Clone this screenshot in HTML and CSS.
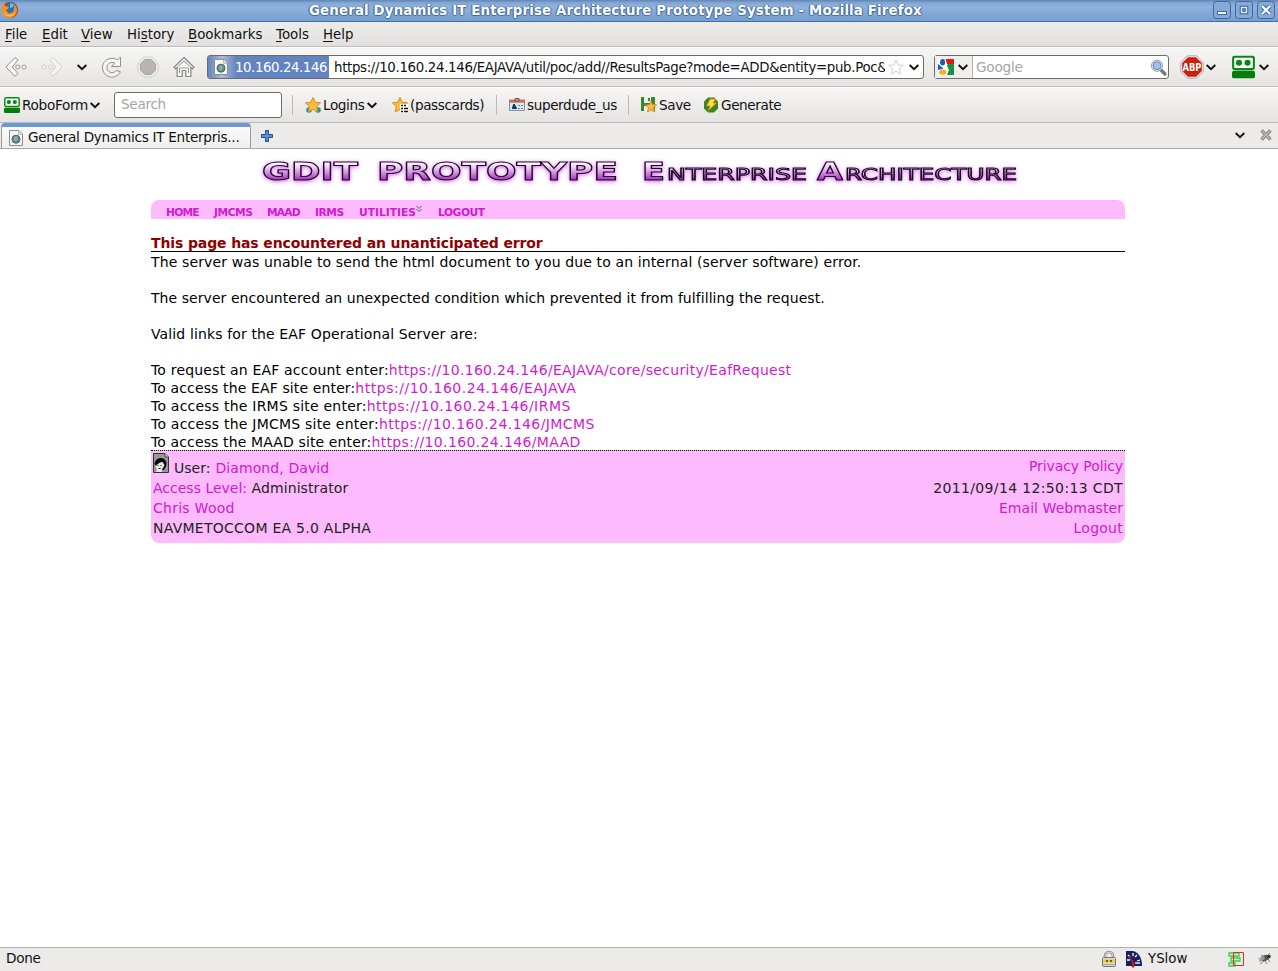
FILE: index.html
```
<!DOCTYPE html>
<html lang="en">
<head>
<meta charset="utf-8">
<title>General Dynamics IT Enterprise Architecture Prototype System</title>
<link rel="stylesheet" href="styles.css">
</head>
<body>
<svg class="defs" width="0" height="0">
  <defs>
    <symbol id="chev" viewBox="0 0 10 7"><path d="M.6 1L5 5.200L9.400 1" fill="none" stroke="#111" stroke-width="2"/></symbol>
    <symbol id="robo" viewBox="0 0 24 24"><rect x="1.2" y="1.2" width="21.6" height="13" rx="2" fill="#fff" stroke="#078a10" stroke-width="2.2"/><circle cx="7.3" cy="7.6" r="3.2" fill="#078a10"/><circle cx="16.2" cy="7.6" r="3.2" fill="#078a10"/><rect x="0" y="16" width="24" height="8" rx="2" fill="#067d0b"/></symbol>
    <symbol id="page" viewBox="0 0 16 16"><path d="M1.5.5H11L14.5 4V15.5H1.5Z" fill="#f7f7f5" stroke="#8d8d88"/><path d="M10.5.8V4.3H14.2" fill="#ddd" stroke="#aaa" stroke-width=".8"/><circle cx="8" cy="9.2" r="4" fill="#5d88a8" stroke="#46617c"/><path d="M6 7l3-1 1 3-2 3-2-2z" fill="#91b17b"/></symbol>
    <symbol id="star" viewBox="0 0 16 16"><path d="M8 .6l2.300 4.700 5.200.6-3.900 3.700 1.200 5.200L8 12.400 3.200 14.800l1.200-5.200L.5 5.900l5.200-.6z" fill="#f8bf3c" stroke="#d58a16"/></symbol>
    <linearGradient id="chrome" x1="0" y1="0" x2="0" y2="1"><stop offset=".2" stop-color="#fff"/><stop offset=".5" stop-color="#d79ee4"/><stop offset=".9" stop-color="#8d0ba8"/></linearGradient>
  </defs>
</svg>
<div class="window">
  <header class="titlebar">
    <svg class="firefox" viewBox="0 0 18 18"><circle cx="9" cy="9" r="8.2" fill="#b9450f"/><circle cx="10" cy="7" r="5.8" fill="#2d70b4"/><path d="M9 2l4 1-1 3-3 1z" fill="#6ebcf0"/><path d="M1 4l2-2 1 3 4 1-1 2-2 1 2 3c3 1 6-1 6-4 1-3 0-4-1-5 4 2 5 6 3 10-3 5-10 5-13 1C0 11 0 7 1 4z" fill="#f59222"/><path d="M2 9c1 5 7 7 12 3-2 5-11 5-12-3z" fill="#ffc551"/></svg>
    <h1 class="window-title">General Dynamics IT Enterprise Architecture Prototype System - Mozilla Firefox</h1>
    <div class="controls">
      <svg viewBox="0 0 18 18"><rect class="btn" x=".5" y=".5" width="17" height="17" rx="3"/><rect x="4.5" y="10.5" width="9" height="3" fill="#fff" stroke="#3e689f"/></svg>
      <svg viewBox="0 0 18 18"><rect class="btn" x=".5" y=".5" width="17" height="17" rx="3"/><rect x="6.500" y="6.500" width="5" height="5" fill="none" stroke="#3e689f" stroke-width="3.600"/><rect x="6.500" y="6.500" width="5" height="5" fill="none" stroke="#dfeafa" stroke-width="1.400"/></svg>
      <svg viewBox="0 0 18 18"><rect class="btn" x=".5" y=".5" width="17" height="17" rx="3"/><path d="M5 5l8 8M13 5l-8 8" stroke="#3e689f" stroke-width="4.4"/><path d="M5 5l8 8M13 5l-8 8" stroke="#fff" stroke-width="2.4"/></svg>
    </div>
  </header>

  <nav class="menubar"><span><u>F</u>ile</span><span><u>E</u>dit</span><span><u>V</u>iew</span><span>Hi<u>s</u>tory</span><span><u>B</u>ookmarks</span><span><u>T</u>ools</span><span><u>H</u>elp</span></nav>

  <div class="navbar">
    <div class="navbuttons">
      <svg viewBox="0 0 24 24"><path d="M2 12L11 2.5l3 2.6L8.2 12l5.8 6.5-3 2.8z" fill="#fafaf9" stroke="#91918e"/><g fill="#fff" stroke="#969693"><circle cx="13.7" cy="12" r="2"/><circle cx="20" cy="12" r="2"/></g></svg>
      <svg viewBox="0 0 24 24"><path d="M22 12L13 2.5l-3 2.6L15.8 12 10 18.5l3 2.8z" fill="#f4f4f3" stroke="#cfcfcc"/><g fill="#f4f4f3" stroke="#d0d0cd"><circle cx="4" cy="12" r="2"/><circle cx="10.3" cy="12" r="2"/></g></svg>
      <svg class="chev" viewBox="0 0 10 7"><use href="#chev"/></svg>
      <svg viewBox="0 0 24 24"><path d="M20.500 2v9.500h-9l3.300-3.400a5.200 5.200 0 1 0 1.500 7.400l4.200 1.300A9.500 9.500 0 1 1 17.500 5z" fill="#f6f6f5" stroke="#91918e" stroke-linejoin="round"/></svg>
      <svg viewBox="0 0 24 24"><path d="M7.8 2h8.4l5.8 5.8v8.4L16.2 22H7.8L2 16.2V7.8z" fill="#eeeeec" stroke="#d0cecb"/><path d="M8.8 4.5h6.4l4.3 4.3v6.4l-4.3 4.3H8.8l-4.3-4.3V8.8z" fill="#bab3b2" stroke="#aaa5a3"/></svg>
      <svg viewBox="0 0 24 24"><path d="M12 2.5l10 9.8-1.7 1.5-1.5-1.3V21.5h-5v-6h-3.6v6h-5v-9l-1.5 1.3L2 12.3z" fill="#f8f8f7" stroke="#858582" stroke-width="1.2"/><path d="M6 11.5L12 6l6 5.5" fill="none" stroke="#858582"/><path d="M7.5 18v-5h9v5" fill="none" stroke="#999"/></svg>
    </div>
    <div class="url">
      <div class="identity"><svg viewBox="0 0 16 16"><use href="#page"/></svg><span>10.160.24.146</span></div>
      <div class="address">https://10.160.24.146/EAJAVA/util/poc/add//ResultsPage?mode=ADD&amp;entity=pub.Poc&amp;</div>
      <svg class="bookmark" viewBox="0 0 16 16"><path d="M8 1l2 5 5.3.3-4 3.4 1.2 5.3L8 12.2 3.5 15l1.2-5.3-4-3.4L6 6z" fill="#fff" stroke="#d0d0cd"/></svg>
      <svg class="chev" viewBox="0 0 10 7"><use href="#chev"/></svg>
    </div>
    <div class="google">
      <div class="engine"><svg class="glogo" viewBox="0 0 16 16"><path fill="#fff" d="M0 0h16v16H0z"/><path d="M7.500 0H16v5H9z" fill="#e41913"/><path d="M9.500 5H16v11H9l2-5-2-4z" fill="#109745"/><path d="M0 5l5.500 4.500L0 11z" fill="#185bc2"/><ellipse cx="4.600" cy="3.300" rx="2.500" ry="3.300" fill="#185bc2"/><ellipse cx="4.700" cy="13.200" rx="3.700" ry="2.600" fill="#f4b31a"/></svg><svg class="chev" viewBox="0 0 10 7"><use href="#chev"/></svg></div>
      <span>Google</span>
      <svg class="lens" viewBox="0 0 17 17"><path d="M10 10l5 5" stroke="#777" stroke-width="3.3" stroke-linecap="round"/><circle cx="7" cy="6.7" r="5.6" fill="#e8eef5" stroke="#9b9e9f"/><circle cx="7" cy="6.7" r="4" fill="#9fc2e9" stroke="#5e88ba"/></svg>
    </div>
    <svg class="abp" viewBox="0 0 24 24"><path d="M7.4.8h9.2l6.6 6.6v9.2l-6.6 6.6H7.4L.8 16.6V7.4z" fill="#eee" stroke="#aaa"/><path d="M8 2.2h8L21.8 8v8L16 21.8H8L2.2 16V8z" fill="#c91f0f"/><text x="2.6" y="16" textLength="18.8" lengthAdjust="spacingAndGlyphs">ABP</text></svg>
    <svg class="chev abp-chev" viewBox="0 0 10 7"><use href="#chev"/></svg>
    <svg class="robo-big" viewBox="0 0 24 24"><use href="#robo"/></svg>
    <svg class="chev robo-chev" viewBox="0 0 10 7"><use href="#chev"/></svg>
  </div>

  <div class="robobar">
    <svg class="i16" viewBox="0 0 24 24"><use href="#robo"/></svg><span class="t-robo">RoboForm</span><svg class="chev" viewBox="0 0 10 7"><use href="#chev"/></svg>
    <div class="searchbox">Search</div>
    <i class="sep sep-a"></i>
    <svg class="i16" viewBox="0 0 16 16"><circle cx="4" cy="13" r="2.8" fill="#238eaa"/><circle cx="13" cy="13" r="2.8" fill="#238eaa"/><use href="#star"/></svg><span class="t-logins">Logins</span><svg class="chev" viewBox="0 0 10 7"><use href="#chev"/></svg>
    <svg class="i16 pass" viewBox="0 0 16 16"><use href="#star"/><path d="M8 7h8v9H8z" fill="#fff"/><path d="M9 8.5h2m1 0h2m-5 3h2m1 0h4m-7 3h2m1 0h4" stroke="#111" stroke-width="1.3"/></svg><span class="t-pass">(passcards)</span>
    <i class="sep sep-b"></i>
    <svg class="i16" viewBox="0 0 16 16"><path d="M.5 3.5h15v10H.5z" fill="#dce8f1" stroke="#8292a1"/><path d="M0 2.500h16v3.200H0z" fill="#d36c4d"/><path d="M6 1.5h4V4H6z" fill="#aaa" stroke="#58656e"/><path d="M3 12c0-3 1-3 1-5h2c0 2 2 2 2 5z" fill="#153e68"/><path d="M9 8.5h5m-5 3h5" stroke="#6986a2" stroke-dasharray="2 1"/></svg><span class="t-user">superdude_us</span>
    <i class="sep sep-c"></i>
    <svg class="i16" viewBox="0 0 16 16"><path d="M0 0h14v14H0z" fill="#348734"/><path d="M3 0h7v6H3zM3 9h8v5H3z" fill="#eaf1e8"/><path d="M7 1h2v3H7z" fill="#348734"/><path d="M10 4l1.7 3.5 4 .3-3 2.8.9 4.4-3.6-2.1L6.500 15l.8-4.3-3-2.8 4-.4z" fill="#f6bb44" stroke="#d07e16" stroke-width=".8"/></svg><span class="t-save">Save</span>
    <svg class="i16" viewBox="0 0 16 16"><path d="M5 .5h6l4 4v7l-4 4H5l-4-4v-7z" fill="#3a861a"/><path d="M7 2h6l-3 4h3.500L5 14l2-5H3.500z" fill="#ffd84d" stroke="#c9811a" stroke-width=".7"/></svg><span class="t-gen">Generate</span>
  </div>

  <div class="tabs">
    <div class="tab"><svg class="i16" viewBox="0 0 16 16"><use href="#page"/></svg><span>General Dynamics IT Enterpris...</span></div>
    <svg class="plus" viewBox="0 0 12 12"><path d="M4.500.5h3v4h4v3h-4v4h-3v-4h-4v-3h4z" fill="#5b91d0" stroke="#204a87"/></svg>
    <svg class="chev tab-chev" viewBox="0 0 10 7"><use href="#chev"/></svg>
    <svg class="tab-close" viewBox="0 0 12 12"><path d="M1.500 1.500l9 9M10.500 1.500l-9 9" stroke="#84867f" stroke-width="3.400"/><path d="M2 2l8 8M10 2l-8 8" stroke="#bbbcb7" stroke-width="1.400"/></svg>
  </div>

  <main class="page">
    <svg class="logo" viewBox="0 0 974 51">
      <g class="logo-text">
        <text class="big" x="111" y="31" textLength="96" lengthAdjust="spacingAndGlyphs">GDIT</text>
        <text class="big" x="226" y="31" textLength="241" lengthAdjust="spacingAndGlyphs">PROTOTYPE</text>
        <text class="big" x="491" y="31" textLength="23" lengthAdjust="spacingAndGlyphs">E</text>
        <text class="small" x="516" y="31" textLength="140" lengthAdjust="spacingAndGlyphs">NTERPRISE</text>
        <text class="big" x="666" y="31" textLength="26" lengthAdjust="spacingAndGlyphs">A</text>
        <text class="small" x="694" y="31" textLength="172" lengthAdjust="spacingAndGlyphs">RCHITECTURE</text>
      </g>
    </svg>
    <nav class="sitenav"><a>HOME</a><a>JMCMS</a><a>MAAD</a><a>IRMS</a><a>UTILITIES<svg viewBox="0 0 6 6"><path d="M.5 0L3 2.500 5.500 0M.5 3L3 5.500 5.500 3" fill="none" stroke="#4c54a5"/></svg></a><a>LOGOUT</a></nav>
    <h2 class="error">This page has encountered an unanticipated error</h2>
    <div class="message">
      <p>The server was unable to send the html document to you due to an internal (server software) error.</p>
      <p class="snug">The server encountered an unexpected condition which prevented it from fulfilling the request.</p>
      <p>Valid links for the EAF Operational Server are:</p>
      <ul>
        <li class="account">To request an EAF account enter:<a>https://10.160.24.146/EAJAVA/core/security/EafRequest</a></li>
        <li class="eaf">To access the EAF site enter:<a>https://10.160.24.146/EAJAVA</a></li>
        <li class="irms">To access the IRMS site enter:<a>https://10.160.24.146/IRMS</a></li>
        <li class="jmcms">To access the JMCMS site enter:<a>https://10.160.24.146/JMCMS</a></li>
        <li class="maad">To access the MAAD site enter:<a>https://10.160.24.146/MAAD</a></li>
      </ul>
    </div>
    <footer class="sitefoot">
      <div class="row first"><span><svg class="face" viewBox="0 0 16 20"><path d="M.5.5H12L15.500 4V19.500H.5z" fill="#999" stroke="#333"/><path d="M12 .5V4h3.500" fill="#ddd" stroke="#444"/><path d="M1.500 11C2 7 5 5 8 5s6 3 5.500 6c0 3-2 4-2.500 6H9l2-5-2-3-3 1-3 3z" fill="#080808"/><path d="M2.500 13l4-3 3-1 2 3-1.500 3-1 1v3H3l1-2z" fill="#e8e8e8"/><path d="M4.500 12.500h1m2 0h1M5.500 15.500h2" stroke="#111"/></svg> User: <a class="username">Diamond, David</a></span><a class="privacy">Privacy Policy</a></div>
      <div class="row"><span><a>Access Level:</a> <span class="role">Administrator</span></span><span class="date">2011/09/14 12:50:13 CDT</span></div>
      <div class="row"><a class="wide">Chris Wood</a><a class="mail">Email Webmaster</a></div>
      <div class="row"><span class="wide">NAVMETOCCOM EA 5.0 ALPHA</span><a class="wide">Logout</a></div>
    </footer>
  </main>

  <div class="status">
    <span class="done">Done</span>
    <svg class="i16 lock" viewBox="0 0 16 16"><path d="M4 8V5a4 4 0 0 1 8 0v3" fill="none" stroke="#888" stroke-width="2.6"/><path d="M4 8V5a4 4 0 0 1 8 0v3" fill="none" stroke="#ddd"/><rect x="1.500" y="6.500" width="13" height="9" rx="1" fill="#ddd9c4" stroke="#777"/><path d="M2 8.500h12v3H2z" fill="#e9cf34"/><path d="M2 13.500h12" stroke="#aaa"/><path d="M5 9h2v2H5zM9 9h2v2H9z" fill="#665e32"/></svg>
    <svg class="i16 gauge" viewBox="0 0 16 16"><path d="M0 0h7c5 1 9 6 9 15H0z" fill="#16215f"/><path d="M2 4l2 2M7 2v3M11 4l-2 2M14 9l-3 1M1 9h3" stroke="#fff" stroke-width="1.300"/><path d="M3 5l4 7-1 4h2l-1-5z" fill="#df1919" stroke="#e11"/><path d="M9 12h5" stroke="#96b6ed" stroke-width="2"/></svg>
    <span class="yslow">YSlow</span>
    <svg class="i16 shape" viewBox="0 0 16 16"><path d="M1 2h10v3H1zM3 7h9v3H3zM1 12h6v3H1z" fill="none" stroke="#37cf45" stroke-width="1.300"/><path d="M5.500 1.500h10v13h-10z" fill="none" stroke="#e02e2e"/></svg>
    <svg class="i16 bug" viewBox="0 0 16 16"><path d="M3 10l4-1M4 13l4-3M5 4l4 3M9 10l2 3M12 8l2 3M11 5l3-3" stroke="#888" fill="none"/><ellipse cx="9" cy="7" rx="4.500" ry="2.800" transform="rotate(-20 9 7)" fill="#555"/><path d="M2 7l6-2 1 3-5 3z" fill="#aaa" opacity=".8"/><circle cx="13" cy="5.500" r="1.800" fill="#333"/></svg>
  </div>
</div>
</body>
</html>
```
FILE: styles.css
```
* { box-sizing: border-box; }
body { margin: 0; font: 13.6px/18px "DejaVu Sans", sans-serif; color: #111; background: #fff; }
.defs { position: absolute; }
svg { display: block; flex: none; overflow: visible; }
.window { display: flex; flex-direction: column; width: 1278px; height: 971px; overflow: hidden; white-space: nowrap; }
.i16 { width: 16px; height: 16px; }
.chev { width: 10px; height: 7px; }

.titlebar { height: 22px; display: flex; flex: none; background: linear-gradient(#6285b4 0, #84a8d5 3px, #8fb3df 7px, #779fd0 20px); border-bottom: 1px solid #436fa8; }
.firefox { width: 18px; height: 18px; margin: 1px 0 0 1px; }
.window-title { flex: 1; margin: 0 0 0 290px; font-size: 13.33px; line-height: 21px; letter-spacing: .16px; font-weight: bold; color: #fff; text-shadow: 0 1px 1px #416799, 1px 0 1px #416799, -1px 0 1px #416799; }
.controls { display: flex; gap: 4px; padding: 1px 3px 0 0; }
.controls svg { width: 18px; height: 18px; }
.btn { fill: #84aad9; stroke: #3e689f; }

.menubar { height: 25px; flex: none; display: grid; grid-template-columns: 37px 39px 46px 61px 88px 47px 50px; padding-left: 5px; line-height: 25px; background: linear-gradient(#edeceb, #e2e1df); border-bottom: 1px solid #bdbcba; font-size: 13.33px; }
.menubar u { text-underline-offset: 2px; }

.navbar { height: 40px; flex: none; display: flex; align-items: center; background: linear-gradient(#f5f5f4, #e5e4e2); border-top: 1px solid #fff; border-bottom: 1px solid #bfbebc; }
.navbuttons { display: flex; align-items: center; width: 207px; padding-left: 4px; }
.navbuttons svg { width: 24px; height: 24px; }
.navbuttons svg + svg { margin-left: 12px; }
.navbuttons .chev, .navbuttons svg.chev { width: 10px; height: 7px; margin-left: 13px; }
.navbuttons .chev + svg { margin-left: 13px; }
.url { width: 717px; height: 24px; display: flex; align-items: center; border: 1px solid #6c6c6a; border-radius: 3px; background: #fff; }
.identity { width: 121px; height: 22px; display: flex; align-items: center; gap: 6px; padding-left: 5px; color: #fff; background: linear-gradient(90deg, #6484bb 0, #a9bcdc 14px, #6685bf 28px, #6284c2 60px); letter-spacing: -.42px; font-size: 13.33px; }
.identity svg { width: 16px; height: 16px; }
.identity span { padding-top: 1px; }
.address { width: 556px; padding: 1px 0 0 5px; overflow: hidden; font-size: 13.33px; letter-spacing: -.32px; }
.bookmark { width: 16px; height: 16px; margin-left: 3px; }
.url .chev { margin-left: 5px; }
.google { width: 235px; height: 24px; margin-left: 10px; display: flex; align-items: center; border: 1px solid #6c6c6a; border-radius: 3px; background: #fff; color: #a5a5a3; }
.engine { width: 38px; height: 22px; display: flex; align-items: center; gap: 4px; padding-left: 3px; background: #f0efee; border-right: 1px solid #b3b2b0; }
.glogo { width: 16px; height: 16px; }
.google span { flex: 1; padding-left: 3px; letter-spacing: -.2px; }
.lens { width: 17px; height: 17px; margin-right: 1px; }
.abp { width: 24px; height: 24px; margin-left: 11px; }
.abp text { font: bold 10px "DejaVu Sans", sans-serif; fill: #fff; }
.abp-chev { margin-left: 2px; }
.robo-big { width: 23px; height: 24px; margin-left: 16px; }
.robo-chev { margin-left: 4px; }

.robobar { height: 36px; flex: none; display: flex; align-items: center; padding-left: 4px; background: linear-gradient(#f7f6f5, #e4e3e1); border-top: 1px solid #fff; border-bottom: 1px solid #bab9b7; }
.robobar span { padding-left: 2px; letter-spacing: -.4px; }
.robobar .t-robo { width: 70px; letter-spacing: -.3px; }
.searchbox { width: 168px; height: 26px; margin-left: 14px; padding-left: 6px; line-height: 23px; border: 1px solid #6c6c6a; border-radius: 3px; background: #fff; color: #a5a5a3; letter-spacing: -.3px; }
.sep { width: 1px; height: 20px; background: #bbbab8; }
.sep-a { margin: 0 12px 0 10px; }
.t-logins { width: 46px; }
.pass { margin-left: 15px; }
.t-pass { width: 88px; }
.sep-b { margin-right: 12px; }
.t-user { width: 103px; }
.sep-c { margin-right: 12px; }
.t-save { width: 46px; }

.tabs { height: 26px; flex: none; display: flex; align-items: center; background: #ecebe9; border-bottom: 1px solid #aaa9a7; }
.tab { width: 250px; height: 25px; align-self: flex-start; margin-left: 1px; display: flex; align-items: center; gap: 4px; padding-left: 6px; background: linear-gradient(#fafaf9, #f0efee); border: 1px solid #9b9a98; border-top: 4px solid #6b98d0; border-bottom: 0; border-radius: 4px 4px 0 0; }
.tab span { letter-spacing: -.28px; padding-bottom: 2px; }
.plus { width: 12px; height: 12px; margin-left: 10px; }
.tab-chev { margin-left: auto; }
.tab-close { width: 12px; height: 12px; margin: 0 6px 2px 15px; }

.page { flex: 1; width: 974px; margin-left: 151px; font-size: 14px; color: #000; }
.page a { color: #d119d1; }
.logo { width: 974px; height: 51px; }
.logo-text { font-family: "DejaVu Sans", sans-serif; fill: url(#chrome); stroke: #1b0221; stroke-width: 1px; filter: drop-shadow(0 1px 2px #d85cf2); }
.big { font-size: 25px; font-weight: bold; }
.small { font-size: 15px; font-weight: normal; }
.sitenav { height: 19px; display: grid; grid-template-columns: 48px 53px 48px 44px 79px 60px; padding-left: 15px; background: #fdbbfd; border-radius: 8px 8px 0 0; font-size: 10.700px; letter-spacing: -.45px; font-weight: bold; line-height: 25px; }
.sitenav a { display: flex; }
.sitenav a:nth-child(1), .sitenav a:nth-child(3) { letter-spacing: -.8px; }
.sitenav a:nth-child(5) { letter-spacing: 0; }
.sitenav svg { width: 6px; height: 6px; margin-top: 6px; }
.error { height: 33px; margin: 0; padding-top: 15px; border-bottom: 1px solid #000; font-size: 14px; line-height: 18px; letter-spacing: -.12px; color: #900000; }
.message { line-height: 18px; padding-top: 1px; letter-spacing: .125px; }
.message p { margin: 0 0 18px; }
.message .snug { letter-spacing: .06px; }
.message ul { list-style: none; margin: 0; padding: 0; }
.message li { height: 18px; }
.account { letter-spacing: .19px; }
.account a { letter-spacing: .31px; }
.eaf a { letter-spacing: .52px; }
.irms, .jmcms { letter-spacing: .22px; }
.irms a { letter-spacing: .46px; }
.jmcms a { letter-spacing: .43px; }
.maad a { letter-spacing: .37px; }
.sitefoot { height: 93px; margin-top: -1px; padding: 2px 2px 0; background: #fdbbfd; border-top: 1px dotted #000; border-radius: 0 0 8px 8px; color: #222; }
.row { height: 20px; display: flex; justify-content: space-between; line-height: 20px; }
.first { height: 25px; line-height: 26px; }
.first span { display: flex; gap: 5px; line-height: 30px; }
.username { letter-spacing: .1px; }
.privacy { letter-spacing: -.1px; }
.role { letter-spacing: .1px; }
.date { letter-spacing: .36px; }
.wide { letter-spacing: .26px; }
.mail { letter-spacing: .06px; }
.face { width: 16px; height: 20px; }

.status { height: 24px; flex: none; display: flex; align-items: center; padding: 0 0 2px 6px; background: #ecebe9; border-top: 1px solid #b4b3b1; line-height: 20px; }
.done { flex: 1; line-height: 20px; padding-bottom: 1px; letter-spacing: -.3px; }
.gauge { margin-left: 9px; }
.yslow { width: 80px; margin-left: 6px; font-size: 13.33px; }
.bug { margin: 0 6px 0 12px; }
```
